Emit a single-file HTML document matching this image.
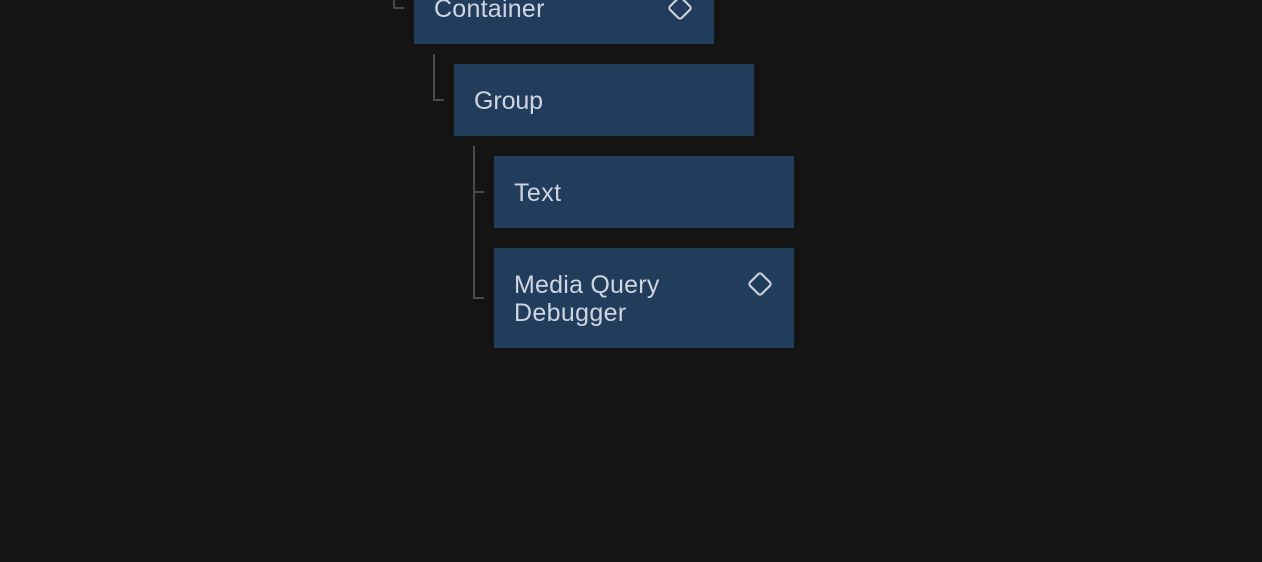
<!DOCTYPE html>
<html>
<head>
<meta charset="utf-8">
<style>
html,body{margin:0;padding:0;width:1262px;height:562px;overflow:hidden;background:#141414}
.b{position:absolute;width:300px;background:#213d5b}
.t{position:absolute;font-family:"Liberation Sans",sans-serif;font-size:25px;line-height:28px;color:#ced5e1;white-space:nowrap}
.l{position:absolute;background:#4b4b4b}
svg{position:absolute;width:24px;height:24px}
</style>
</head>
<body>
<div class="b" style="left:414px;top:0;height:44px"></div>
<div class="b" style="left:454px;top:64px;height:72px"></div>
<div class="b" style="left:494px;top:156px;height:72px"></div>
<div class="b" style="left:494px;top:248px;height:100px"></div>

<div class="l" style="left:393px;top:0;width:2px;height:9px"></div>
<div class="l" style="left:393px;top:7px;width:11px;height:2px"></div>
<div class="l" style="left:433px;top:54px;width:2px;height:47px"></div>
<div class="l" style="left:433px;top:99px;width:11px;height:2px"></div>
<div class="l" style="left:473px;top:146px;width:2px;height:153px"></div>
<div class="l" style="left:473px;top:191px;width:11px;height:2px"></div>
<div class="l" style="left:473px;top:297px;width:11px;height:2px"></div>

<div class="t" style="left:434px;top:-5px;letter-spacing:.25px">Container</div>
<div class="t" style="left:474px;top:87px;letter-spacing:-.1px">Group</div>
<div class="t" style="left:514px;top:179px;letter-spacing:.4px">Text</div>
<div class="t" style="left:514px;top:271px;letter-spacing:.22px">Media Query<br><span style="letter-spacing:.35px">Debugger</span></div>

<svg viewBox="0 0 24 24" style="left:668px;top:-4px"><rect x="3.8" y="3.8" width="16.4" height="16.4" rx="2.4" fill="none" stroke="#ced5e1" stroke-width="2.1" transform="rotate(45 12 12)"/></svg>
<svg viewBox="0 0 24 24" style="left:748px;top:272px"><rect x="3.8" y="3.8" width="16.4" height="16.4" rx="2.4" fill="none" stroke="#ced5e1" stroke-width="2.1" transform="rotate(45 12 12)"/></svg>
</body>
</html>
